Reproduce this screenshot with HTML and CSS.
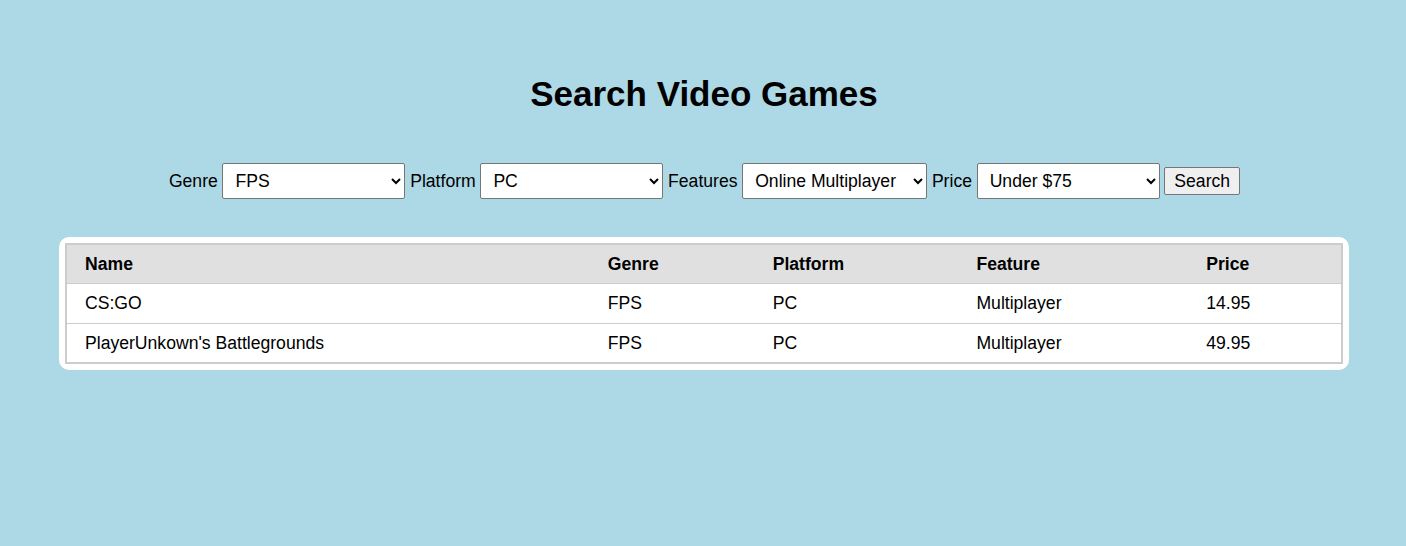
FILE: index.html
```html
<!DOCTYPE html>
<html lang="en">
<head>
<meta charset="utf-8">
<title>Search Video Games</title>
<link rel="stylesheet" href="styles.css">
</head>
<body>
<h1 class="title">Search Video Games</h1>
<form class="search-form">
  <label class="field-label" for="genre">Genre</label>
  <select id="genre" class="field-select">
    <option>FPS</option>
  </select>
  <label class="field-label" for="platform">Platform</label>
  <select id="platform" class="field-select">
    <option>PC</option>
  </select>
  <label class="field-label" for="features">Features</label>
  <select id="features" class="field-select field-select-wide">
    <option>Online Multiplayer</option>
  </select>
  <label class="field-label" for="price">Price</label>
  <select id="price" class="field-select">
    <option>Under $75</option>
  </select>
  <button type="button" class="search-button">Search</button>
</form>
<div class="results-card">
  <table class="results">
    <thead>
      <tr><th>Name</th><th>Genre</th><th>Platform</th><th>Feature</th><th>Price</th></tr>
    </thead>
    <tbody>
      <tr><td>CS:GO</td><td>FPS</td><td>PC</td><td>Multiplayer</td><td>14.95</td></tr>
      <tr><td>PlayerUnkown's Battlegrounds</td><td>FPS</td><td>PC</td><td>Multiplayer</td><td>49.95</td></tr>
    </tbody>
  </table>
</div>
</body>
</html>
```
FILE: styles.css
```css
html, body {
  margin: 0;
  padding: 0;
}
body {
  background: #add8e6;
  font-family: "Liberation Sans", Arial, sans-serif;
  color: #000;
  padding: 73px 57px 0 59px;
}
.title {
  margin: 0;
  text-align: center;
  font-size: 35px;
  line-height: 42px;
  font-weight: bold;
}
.search-form {
  display: flex;
  justify-content: center;
  align-items: center;
  gap: 4.7px;
  margin-top: 48px;
  padding-left: 1px;
  font-size: 17.6px;
}
.field-label {
  font-size: 17.6px;
}
.field-select {
  width: 183px;
  height: 36px;
  font-family: "Liberation Sans", Arial, sans-serif;
  font-size: 17.6px;
  padding: 0 8px;
  border: 1px solid #767676;
  border-radius: 2px;
  background: #fff;
  color: #000;
}
.field-select-wide {
  width: 185px;
}
.search-button {
  font-family: "Liberation Sans", Arial, sans-serif;
  font-size: 17.6px;
  height: 28px;
  padding: 0 9px;
  border: 1px solid #767676;
  border-radius: 2px;
  background: #efefef;
  color: #000;
}
.results-card {
  margin-top: 38px;
  background: #fff;
  border-radius: 10px;
  padding: 6px;
}
.results {
  width: 100%;
  border-collapse: collapse;
  border: 2px solid #ccc;
  font-size: 17.6px;
}
.results th,
.results td {
  text-align: left;
  padding: 0 18px;
  height: 38px;
}
.results th {
  background: #e0e0e0;
  font-weight: bold;
}
.results tbody td {
  height: 39px;
  border-top: 1px solid #ccc;
}
.results tbody tr:last-child td {
  height: 38px;
}
```
